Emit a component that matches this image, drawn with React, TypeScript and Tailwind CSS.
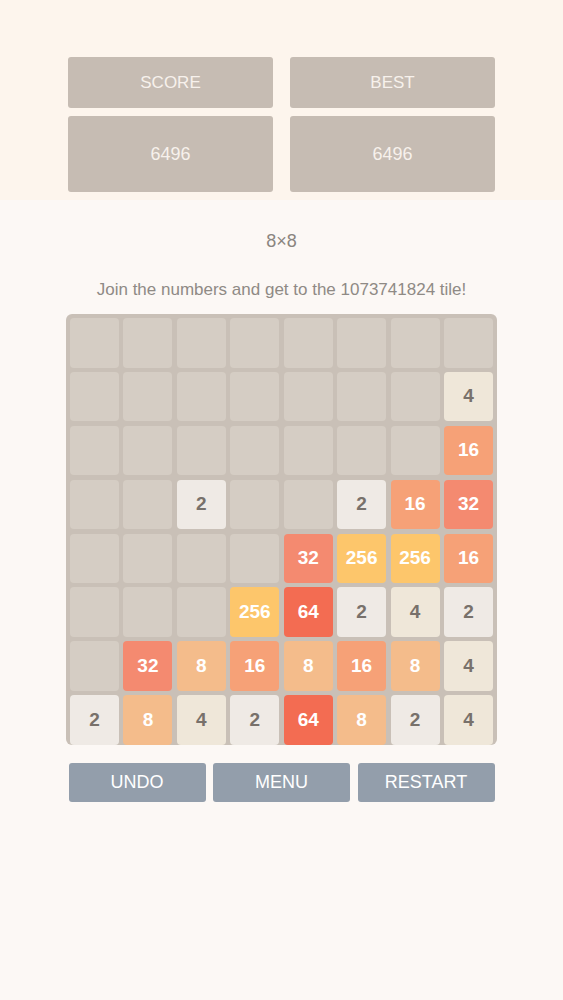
const board: number[][] = [
  [0, 0, 0, 0, 0, 0, 0, 0],
  [0, 0, 0, 0, 0, 0, 0, 4],
  [0, 0, 0, 0, 0, 0, 0, 16],
  [0, 0, 2, 0, 0, 2, 16, 32],
  [0, 0, 0, 0, 32, 256, 256, 16],
  [0, 0, 0, 256, 64, 2, 4, 2],
  [0, 32, 8, 16, 8, 16, 8, 4],
  [2, 8, 4, 2, 64, 8, 2, 4],
];

const tileStyle: Record<number, string> = {
  0: 'bg-[#d5cdc4]',
  2: 'bg-[#efeae5] text-[#78716b]',
  4: 'bg-[#efe7d9] text-[#78716b]',
  8: 'bg-[#f4bc8b] text-white',
  16: 'bg-[#f6a177] text-white',
  32: 'bg-[#f48a70] text-white',
  64: 'bg-[#f36c52] text-white',
  256: 'bg-[#fdc66b] text-white',
};

function Tile({ value }: { value: number }) {
  return (
    <div
      className={`h-[49.5px] rounded-[4px] flex items-center justify-center font-bold ${
        value >= 100 ? 'text-[19px]' : 'text-[19px]'
      } ${tileStyle[value]}`}
    >
      {value > 0 ? value : ''}
    </div>
  );
}

export default function App() {
  return (
    <div className="min-h-[1000px] bg-[#fcf8f5] font-['Liberation_Sans',Arial,sans-serif]">
      {/* Score header */}
      <div className="bg-[#fdf5ed] h-[200px] pt-[57px] flex justify-center gap-[17px]">
        {['SCORE', 'BEST'].map((label) => (
          <div key={label} className="w-[205px] flex flex-col gap-[8px]">
            <div className="h-[51px] bg-[#c6bcb3] rounded-[3px] flex items-center justify-center text-[#f7f1ec] text-[17px] font-light">
              {label}
            </div>
            <div className="h-[76px] bg-[#c6bcb3] rounded-[3px] flex items-center justify-center text-[#f7f1ec] text-[18px] font-light">
              6496
            </div>
          </div>
        ))}
      </div>

      <div className="flex flex-col items-center">
        <div className="mt-[31px] text-[18px] text-[#8a857f] leading-[20px]">8×8</div>
        <div className="mt-[29px] text-[17px] text-[#8f8a85] leading-[20px]">
          Join the numbers and get to the 1073741824 tile!
        </div>

        {/* Board */}
        <div className="mt-[14px] w-[431px] h-[431px] bg-[#c9c0b7] rounded-[6px] p-[4px] grid grid-cols-8 gap-[4.4px]">
          {board.flat().map((v, i) => (
            <Tile key={i} value={v} />
          ))}
        </div>

        {/* Buttons */}
        <div className="mt-[18px] w-[426px] flex gap-[7.5px]">
          {['UNDO', 'MENU', 'RESTART'].map((b) => (
            <button
              key={b}
              className="flex-1 h-[39px] bg-[#939eab] rounded-[3px] text-white text-[18px] flex items-center justify-center"
            >
              {b}
            </button>
          ))}
        </div>
      </div>
    </div>
  );
}
